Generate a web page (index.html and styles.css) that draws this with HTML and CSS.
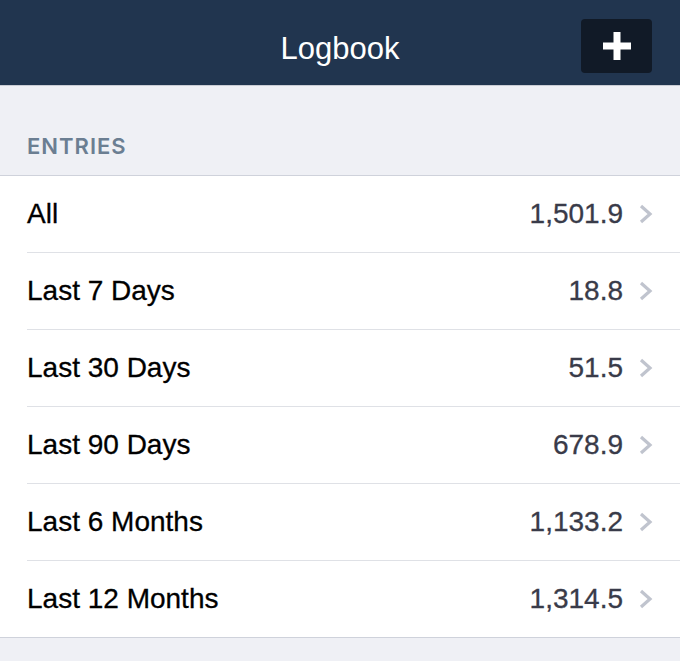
FILE: index.html
```html
<!DOCTYPE html>
<html lang="en">

<head>
    <meta charset="UTF-8">
    <meta name="viewport" content="width=device-width, initial-scale=1.0">
    <title>Logbook</title>
    <link rel="stylesheet" href="styles.css">
</head>

<body>
    <div class="navbar">
        <h1>Logbook</h1>
        <button class="add-btn" aria-label="Add entry">
            <svg width="30" height="30" viewBox="0 0 30 30">
                <path d="M11.5 1h7v10.5H29v7H18.5V29h-7V18.5H1v-7h10.5z" fill="#fff" />
            </svg>
        </button>
    </div>
    <div class="section-title">ENTRIES</div>
    <ul class="list">
        <li><span class="label">All</span><span class="value">1,501.9</span><svg class="chevron" viewBox="0 0 14 20"><polyline points="2,2 11,10 2,18" /></svg></li>
        <li><span class="label">Last 7 Days</span><span class="value">18.8</span><svg class="chevron" viewBox="0 0 14 20"><polyline points="2,2 11,10 2,18" /></svg></li>
        <li><span class="label">Last 30 Days</span><span class="value">51.5</span><svg class="chevron" viewBox="0 0 14 20"><polyline points="2,2 11,10 2,18" /></svg></li>
        <li><span class="label">Last 90 Days</span><span class="value">678.9</span><svg class="chevron" viewBox="0 0 14 20"><polyline points="2,2 11,10 2,18" /></svg></li>
        <li><span class="label">Last 6 Months</span><span class="value">1,133.2</span><svg class="chevron" viewBox="0 0 14 20"><polyline points="2,2 11,10 2,18" /></svg></li>
        <li><span class="label">Last 12 Months</span><span class="value">1,314.5</span><svg class="chevron" viewBox="0 0 14 20"><polyline points="2,2 11,10 2,18" /></svg></li>
    </ul>
</body>

</html>
```

FILE: styles.css
```css
body {
    font-family: "Liberation Sans", Arial, sans-serif;
    background-color: #eff0f5;
    margin: 0;
    padding: 0;
}

.navbar {
    height: 85px;
    background-color: #21354f;
    border-bottom: 1px solid #c9ccd4;
    display: flex;
    align-items: center;
    justify-content: center;
    position: relative;
}

.navbar h1 {
    margin: 0;
    color: white;
    font-size: 31px;
    font-weight: normal;
    margin-top: 12px;
}

.add-btn {
    position: absolute;
    right: 28px;
    top: 19px;
    width: 71px;
    height: 54px;
    background-color: #111a27;
    border: none;
    border-radius: 4px;
    display: flex;
    align-items: center;
    justify-content: center;
    padding: 0;
    cursor: pointer;
}

.section-title {
    font-family: Inter, "Liberation Sans", sans-serif;
    font-weight: 600;
    color: #6b7e92;
    font-size: 22px;
    letter-spacing: 1px;
    padding: 48px 27px 17px;
    line-height: 24px;
}

.list {
    list-style: none;
    margin: 0;
    padding: 0 0 0 27px;
    background-color: white;
    border-top: 1px solid #cfd2db;
    border-bottom: 1px solid #cfd2db;
}

.list li {
    height: 76px;
    display: flex;
    align-items: center;
    padding-right: 27px;
    border-bottom: 1px solid #dfe1e6;
    font-size: 28px;
    -webkit-text-stroke: 0.3px;
}

.list li:last-child {
    border-bottom: none;
}

.label {
    flex: 1;
    color: #000;
}

.value {
    color: #393b49;
}

.chevron {
    width: 14px;
    height: 20px;
    margin-left: 16px;
    fill: none;
    stroke: #c0c4ce;
    stroke-width: 3.2;
}
```
